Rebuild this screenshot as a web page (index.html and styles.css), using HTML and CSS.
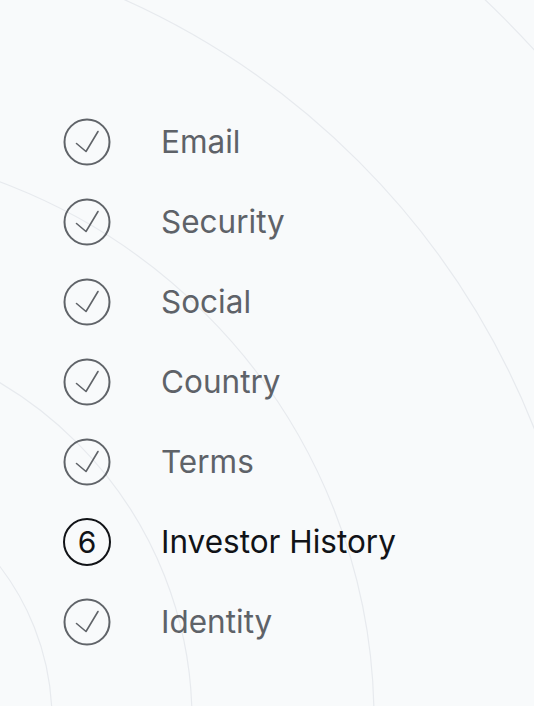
FILE: index.html
```html
<!DOCTYPE html>
<html lang="en">
<head>
<meta charset="utf-8">
<title>Steps</title>
<link rel="stylesheet" href="styles.css">
</head>
<body>
<div class="page">
  <svg class="bg" width="534" height="706" viewBox="0 0 534 706" aria-hidden="true">
    <g fill="none" stroke="#e7eaee" stroke-width="1.2">
      <circle cx="-200" cy="720" r="252"/>
      <circle cx="-200" cy="720" r="392"/>
      <circle cx="-200" cy="720" r="574"/>
      <circle cx="-200" cy="720" r="790"/>
      <circle cx="-200" cy="720" r="994"/>
    </g>
  </svg>
  <ol class="steps">
    <li class="step done">
      <svg class="icon" width="48" height="48" viewBox="0 0 48 48"><circle cx="24" cy="24" r="22.5"/><path d="M13.5 25.5 L23 33.5 L35 13.5"/></svg>
      <span class="label">Email</span>
    </li>
    <li class="step done">
      <svg class="icon" width="48" height="48" viewBox="0 0 48 48"><circle cx="24" cy="24" r="22.5"/><path d="M13.5 25.5 L23 33.5 L35 13.5"/></svg>
      <span class="label">Security</span>
    </li>
    <li class="step done">
      <svg class="icon" width="48" height="48" viewBox="0 0 48 48"><circle cx="24" cy="24" r="22.5"/><path d="M13.5 25.5 L23 33.5 L35 13.5"/></svg>
      <span class="label">Social</span>
    </li>
    <li class="step done">
      <svg class="icon" width="48" height="48" viewBox="0 0 48 48"><circle cx="24" cy="24" r="22.5"/><path d="M13.5 25.5 L23 33.5 L35 13.5"/></svg>
      <span class="label">Country</span>
    </li>
    <li class="step done">
      <svg class="icon" width="48" height="48" viewBox="0 0 48 48"><circle cx="24" cy="24" r="22.5"/><path d="M13.5 25.5 L23 33.5 L35 13.5"/></svg>
      <span class="label">Terms</span>
    </li>
    <li class="step current">
      <span class="num">6</span>
      <span class="label">Investor History</span>
    </li>
    <li class="step done">
      <svg class="icon" width="48" height="48" viewBox="0 0 48 48"><circle cx="24" cy="24" r="22.5"/><path d="M13.5 25.5 L23 33.5 L35 13.5"/></svg>
      <span class="label">Identity</span>
    </li>
  </ol>
</div>
</body>
</html>
```
FILE: styles.css
```css
html, body {
  margin: 0;
  padding: 0;
  background: #f8fafb;
}
.page {
  position: relative;
  width: 534px;
  height: 706px;
  overflow: hidden;
  font-family: Inter, "Liberation Sans", sans-serif;
}
.bg {
  position: absolute;
  left: 0;
  top: 0;
}
.steps {
  position: relative;
  list-style: none;
  margin: 0;
  padding: 118px 0 0 63px;
  display: flex;
  flex-direction: column;
  gap: 32px;
}
.step {
  display: flex;
  align-items: center;
  gap: 50px;
  height: 48px;
}
.icon {
  flex: none;
  display: block;
}
.icon circle {
  fill: none;
  stroke: #606469;
  stroke-width: 2;
}
.icon path {
  fill: none;
  stroke: #606469;
  stroke-width: 1.6;
  stroke-linecap: round;
  stroke-linejoin: round;
}
.num {
  flex: none;
  box-sizing: border-box;
  width: 48px;
  height: 48px;
  border: 2.5px solid #111317;
  border-radius: 50%;
  display: flex;
  align-items: center;
  justify-content: center;
  font-size: 30px;
  color: #111317;
  line-height: 1;
}
.label {
  font-size: 31.5px;
  line-height: 48px;
  color: #5e6268;
}
.current .label {
  color: #111317;
}
```
